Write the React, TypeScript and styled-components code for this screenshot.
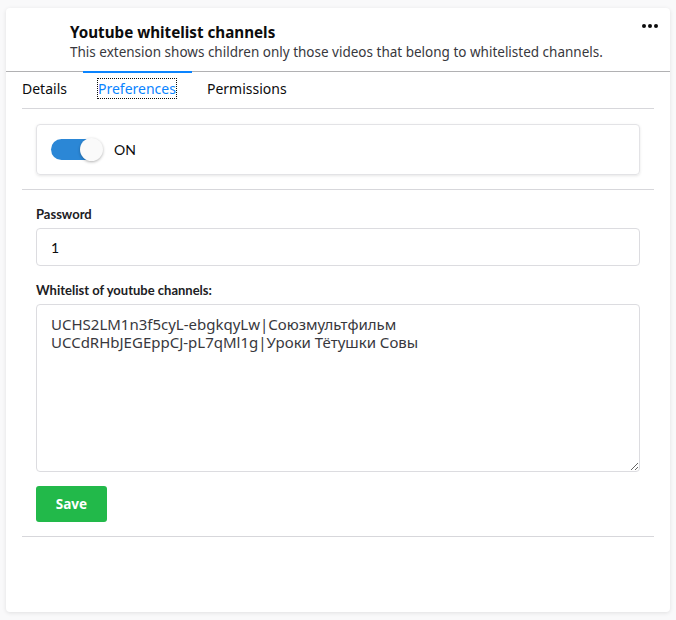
import React from "react";
import styled, { createGlobalStyle } from "styled-components";

const Global = createGlobalStyle`
  html, body { margin: 0; padding: 0; background: #f9f9fa; }
  body { font-family: "Open Sans", "Noto Sans", sans-serif; color: #0c0c0d; }
  * { box-sizing: border-box; }
`;

const Page = styled.div`
  padding: 8px 6px 8px 6px;
`;

const Card = styled.div`
  background: #fff;
  border-radius: 4px;
  box-shadow: 0 1px 4px rgba(12, 12, 13, 0.1);
  min-height: 604px;
  display: flex;
  flex-direction: column;
`;

const Header = styled.div`
  display: flex;
  align-items: flex-start;
  padding: 14px 12px 0 64px;
  height: 64px;
  border-bottom: 1px solid #b1b1b3;
`;

const HeaderText = styled.div`
  flex: 1;
  display: flex;
  flex-direction: column;
`;

const Title = styled.div`
  font-family: "Noto Sans", sans-serif;
  font-weight: 700;
  font-size: 15.2px;
  line-height: 20px;
  color: #0c0c0d;
`;

const Subtitle = styled.div`
  font-family: "Noto Sans", sans-serif;
  font-size: 13.5px;
  line-height: 20px;
  color: #38383d;
`;

const More = styled.div`
  margin-top: 2px;
  display: flex;
  gap: 2px;
`;

const Dot = styled.span`
  width: 4px;
  height: 4px;
  border-radius: 50%;
  background: #0c0c0d;
`;

const Tabs = styled.div`
  display: flex;
  padding-left: 1px;
  height: 34px;
`;

const Tab = styled.div<{ $active?: boolean }>`
  padding: 7px 16px 0 15px;
  font-family: "Noto Sans", sans-serif;
  font-size: 14px;
  line-height: 18px;
  color: ${(p) => (p.$active ? "#0a84ff" : "#0c0c0d")};
  border-top: 2px solid ${(p) => (p.$active ? "#0a84ff" : "transparent")};
  margin-top: -1px;
`;

const TabLabel = styled.span<{ $focus?: boolean }>`
  outline: ${(p) => (p.$focus ? "1px dotted #0c0c0d" : "none")};
`;

const Body = styled.div`
  margin: 2px 16px 0;
  border-top: 1px solid #d7d7db;
`;

const Section = styled.div`
  padding: 15px 14px 14px;
  border-bottom: 1px solid #d7d7db;
`;

const ToggleBox = styled.div`
  display: flex;
  align-items: center;
  gap: 12px;
  height: 51px;
  padding: 0 14px;
  border: 1px solid #e3e3e6;
  border-radius: 4px;
  box-shadow: 0 1px 3px rgba(12, 12, 13, 0.1);
  font-family: "Lato", sans-serif;
  font-size: 14px;
`;

const Switch = styled.div<{ $on: boolean }>`
  position: relative;
  width: 51px;
  height: 21px;
  border-radius: 11px;
  background: ${(p) => (p.$on ? "#2b87d6" : "#ccc")};
`;

const Knob = styled.div<{ $on: boolean }>`
  position: absolute;
  top: -1px;
  ${(p) => (p.$on ? "right: -1px;" : "left: -1px;")}
  width: 23px;
  height: 23px;
  border-radius: 50%;
  background: #fafafa;
  box-shadow: 0 1px 3px rgba(0, 0, 0, 0.3);
`;

const Form = styled.div`
  padding: 15px 14px 14px;
  border-bottom: 1px solid #d7d7db;
  display: flex;
  flex-direction: column;
  align-items: flex-start;
`;

const Label = styled.label`
  font-family: "Lato", sans-serif;
  font-weight: 700;
  font-size: 13px;
  line-height: 18px;
  color: #202023;
  margin-bottom: 5px;
`;

const Input = styled.input`
  width: 100%;
  height: 38px;
  border: 1px solid #dcdce0;
  border-radius: 4px;
  padding: 0 14px;
  font-family: "Lato", sans-serif;
  font-size: 14px;
  color: #0c0c0d;
  margin-bottom: 15px;
  outline: none;
`;

const TextArea = styled.textarea`
  width: 100%;
  height: 168px;
  border: 1px solid #dcdce0;
  border-radius: 4px;
  padding: 10px 14px;
  font-family: "Noto Sans", sans-serif;
  font-size: 15px;
  line-height: 18px;
  color: #38383d;
  margin-bottom: 14px;
  outline: none;
  resize: vertical;
`;

const SaveButton = styled.button`
  width: 71px;
  height: 36px;
  border: none;
  border-radius: 3px;
  background: #22b94a;
  color: #fff;
  font-family: "Noto Sans", sans-serif;
  font-weight: 700;
  font-size: 13.5px;
  cursor: pointer;
`;

export default function App() {
  return (
    <Page>
      <Global />
      <Card>
        <Header>
          <HeaderText>
            <Title>Youtube whitelist channels</Title>
            <Subtitle>
              This extension shows children only those videos that belong to whitelisted channels.
            </Subtitle>
          </HeaderText>
          <More>
            <Dot />
            <Dot />
            <Dot />
          </More>
        </Header>
        <Tabs>
          <Tab>Details</Tab>
          <Tab $active>
            <TabLabel $focus>Preferences</TabLabel>
          </Tab>
          <Tab>Permissions</Tab>
        </Tabs>
        <Body>
          <Section>
            <ToggleBox>
              <Switch $on>
                <Knob $on />
              </Switch>
              <span>ON</span>
            </ToggleBox>
          </Section>
          <Form>
            <Label>Password</Label>
            <Input defaultValue="1" />
            <Label>Whitelist of youtube channels:</Label>
            <TextArea
              defaultValue={"UCHS2LM1n3f5cyL-ebgkqyLw|Союзмультфильм\nUCCdRHbJEGEppCJ-pL7qMl1g|Уроки Тётушки Совы"}
            />
            <SaveButton>Save</SaveButton>
          </Form>
        </Body>
      </Card>
    </Page>
  );
}
